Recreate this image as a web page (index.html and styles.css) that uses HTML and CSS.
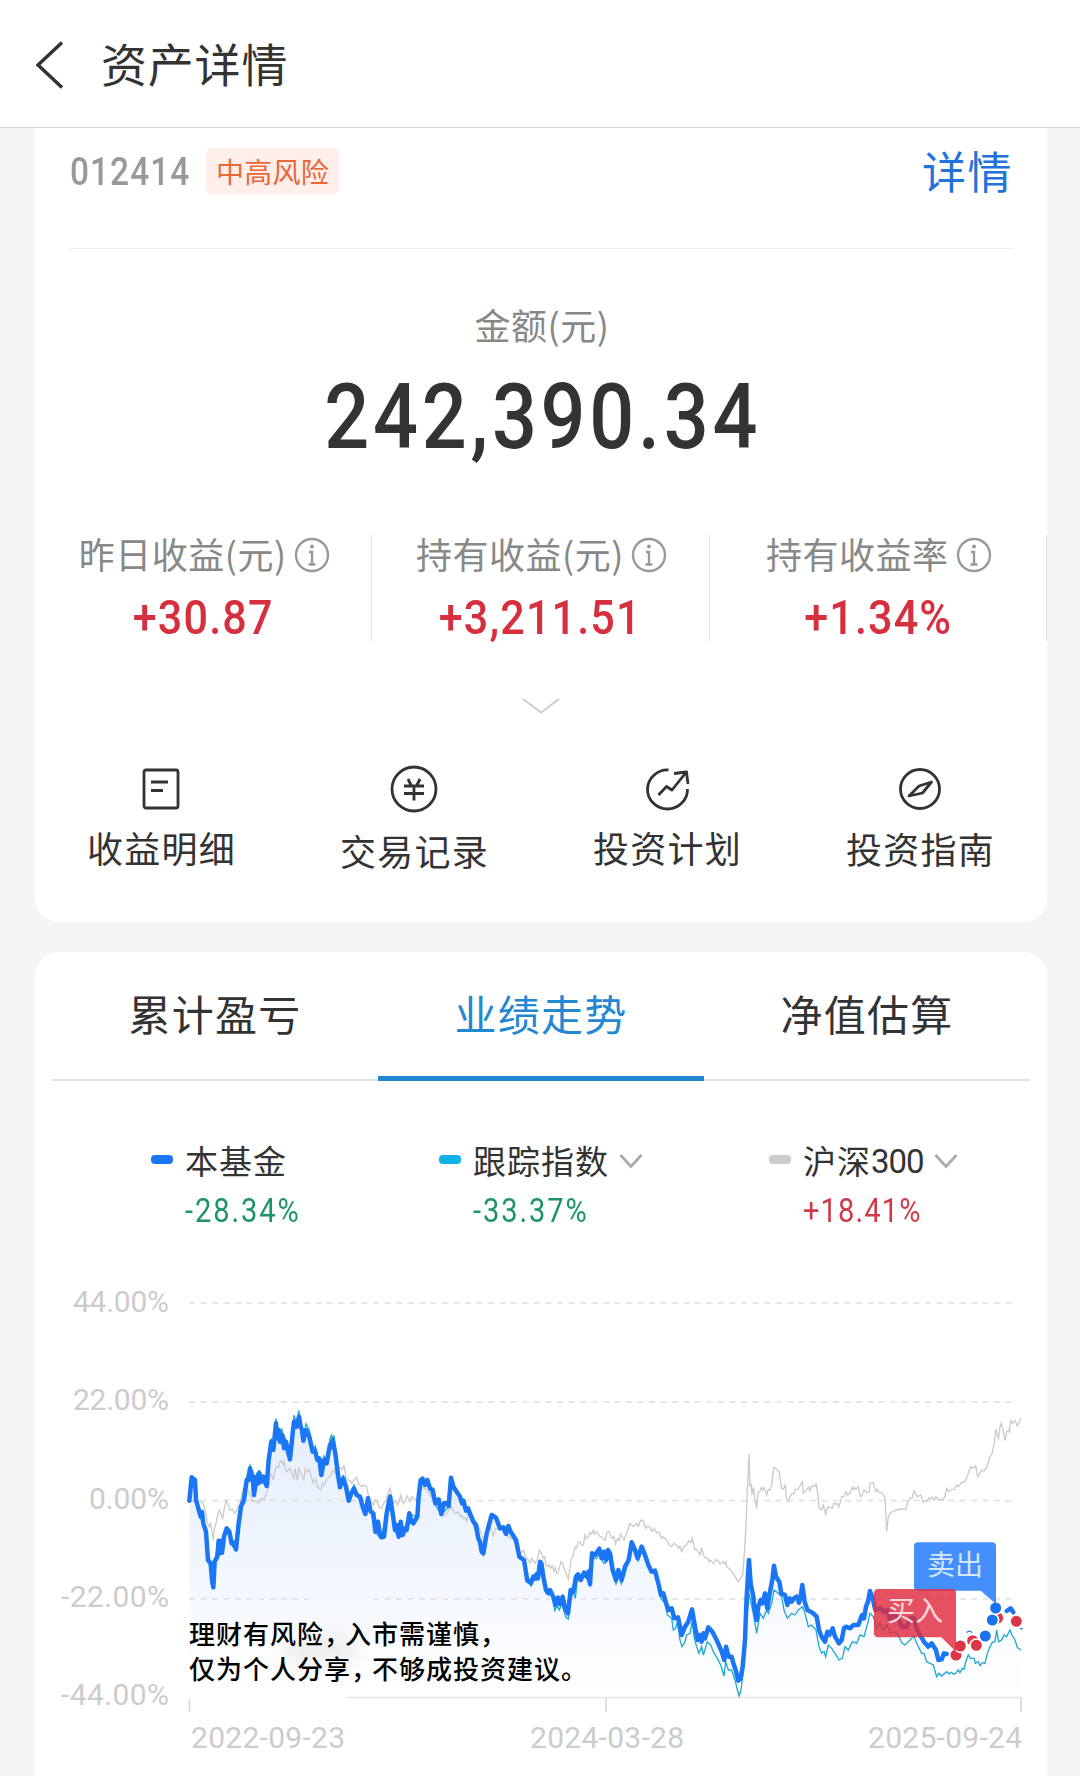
FILE: index.html
```html
<!DOCTYPE html>
<html lang="zh-CN">
<head>
    <meta charset="UTF-8">
    <meta name="viewport" content="width=device-width, initial-scale=1.0">
    <title>资产详情</title>
    <link rel="stylesheet" href="styles.css">
</head>
<body>
    <header>
        <svg class="back" viewBox="0 0 28 48"><path d="M26 1.500L2 24l24 22.500"/></svg>
        <h1>资产详情</h1>
    </header>
    <main>
        <section class="card asset-card">
            <div class="fund-row">
                <span class="fund-code">012414</span>
                <span class="risk-tag">中高风险</span>
                <a class="detail-link">详情</a>
            </div>
            <div class="amount-label">金额(元)</div>
            <div class="amount">242,390.34</div>
            <div class="stats">
                <div class="stat">
                    <div class="stat-label">昨日收益(元)<svg class="info" viewBox="0 0 36 36"><circle cx="18" cy="18" r="16"/><circle class="dot" cx="18" cy="9.500" r="2"/><path d="M15 15h3v12M14.500 27.500h7"/></svg></div>
                    <div class="stat-value">+30.87</div>
                </div>
                <div class="stat">
                    <div class="stat-label">持有收益(元)<svg class="info" viewBox="0 0 36 36"><circle cx="18" cy="18" r="16"/><circle class="dot" cx="18" cy="9.500" r="2"/><path d="M15 15h3v12M14.500 27.500h7"/></svg></div>
                    <div class="stat-value">+3,211.51</div>
                </div>
                <div class="stat">
                    <div class="stat-label">持有收益率<svg class="info" viewBox="0 0 36 36"><circle cx="18" cy="18" r="16"/><circle class="dot" cx="18" cy="9.500" r="2"/><path d="M15 15h3v12M14.500 27.500h7"/></svg></div>
                    <div class="stat-value">+1.34%</div>
                </div>
            </div>
            <svg class="expand" viewBox="0 0 38 16"><path d="M1 1l18 13.500L37 1"/></svg>
            <div class="actions">
                <div class="action">
                    <svg viewBox="0 0 48 48"><rect x="7" y="5" width="34" height="38" rx="2"/><path d="M14 17h17M14 25.500h12"/></svg>
                    <span>收益明细</span>
                </div>
                <div class="action action-low">
                    <svg viewBox="0 0 48 48"><circle cx="24" cy="24" r="22"/><path d="M18 14l3.500 7M30 14l-3.500 7M14 21h20M14 28.500h20M24 21v14.500"/></svg>
                    <span>交易记录</span>
                </div>
                <div class="action">
                    <svg viewBox="0 0 48 48"><path d="M25.500 5A20 19.500 0 1 0 44.500 24M31 8.500L43.500 7l1.500 12M43 7.500L29 25l-5.500-3.500L15.500 30"/></svg>
                    <span>投资计划</span>
                </div>
                <div class="action action-mid">
                    <svg viewBox="0 0 48 48"><circle cx="24" cy="24" r="19.500"/><path d="M35.500 17l-12.500 4L13 31l13.500-3z"/></svg>
                    <span>投资指南</span>
                </div>
            </div>
        </section>

        <section class="card chart-card">
            <nav class="tabs">
                <a class="tab">累计盈亏</a>
                <a class="tab active">业绩走势</a>
                <a class="tab">净值估算</a>
            </nav>
            <div class="legend">
                <div class="legend-item">
                    <i class="mark mark-fund"></i>
                    <div>
                        <div class="legend-name">本基金</div>
                        <div class="legend-value down">-28.34%</div>
                    </div>
                </div>
                <div class="legend-item">
                    <i class="mark mark-index"></i>
                    <div>
                        <div class="legend-name">跟踪指数<svg viewBox="0 0 24 16"><path d="M1.500 2L12 13.500 22.500 2"/></svg></div>
                        <div class="legend-value down">-33.37%</div>
                    </div>
                </div>
                <div class="legend-item">
                    <i class="mark mark-hs"></i>
                    <div>
                        <div class="legend-name">沪深<span class="num">300</span><svg viewBox="0 0 24 16"><path d="M1.500 2L12 13.500 22.500 2"/></svg></div>
                        <div class="legend-value up">+18.41%</div>
                    </div>
                </div>
            </div>

            <svg class="chart" viewBox="35 1227 1012 549">
                <defs>
                    <linearGradient id="area" gradientUnits="userSpaceOnUse" x1="0" y1="100" x2="0" y2="950">
                        <stop offset="0" stop-color="#e4edfd"/>
                        <stop offset="0.6" stop-color="#f3f7fe"/>
                        <stop offset="1" stop-color="#ffffff"/>
                    </linearGradient>
                    <filter id="soft" x="-30%" y="-60%" width="160%" height="220%"><feGaussianBlur stdDeviation="10"/></filter>
                </defs>

                <!-- series, plotted on a 3x grid that starts at 180,1380 -->
                <g transform="translate(180 1380) scale(0.33333)">
                    <path class="area" d="M28 362L35 292 45 300 48 360 62 410 78 455 84 540 100 622 104 545 116 482 124 518 140 445 155 490 168 508 183 380 192 360 210 265 222 345 238 280 260 318 266 240 274 185 288 130 300 185 330 238 342 120 357 108 370 182 388 170 405 215 424 285 440 250 458 180 472 270 480 322 498 320 506 362 522 325 556 402 564 355 586 455 604 472 630 350 645 450 668 465 688 400 712 410 722 300 742 300 766 370 784 402 806 378 813 293 840 350 880 425 910 520 935 405 978 460 1008 480 1018 530 1032 540 1042 602 1070 595 1080 545 1098 630 1128 675 1164 700 1180 625 1202 585 1230 610 1238 520 1290 520 1308 600 1325 600 1355 487 1375 535 1385 500 1415 575 1443 645 1505 765 1536 688 1555 780 1585 742 1633 840 1678 900 1695 760 1707 540 1730 720 1762 685 1782 557 1815 650 1867 615 1910 710 1935 785 1980 790 2058 690 2070 633 2110 700 2200 760 2275 850 2360 840 2420 800 2448 748 2523 800V953H28z"/>
                </g>
                <ellipse class="haze-white" cx="290" cy="1675" rx="125" ry="42" filter="url(#soft)"/>
                <ellipse class="haze-gray" cx="320" cy="1650" rx="42" ry="16" filter="url(#soft)"/>

                <g class="grid">
                    <path d="M189 1303H1017M189 1402H1017M189 1500.500H1017M189 1599H313M373 1599H1017"/>
                    <path class="base" d="M346 1697.500H1021"/>
                    <path class="tick" d="M189.500 1699v13M606 1698v14M1021 1697v15"/>
                </g>

                <g transform="translate(180 1380) scale(0.33333)">
                    <polyline class="line-hs" points="28,362 60,364 70,370 78,400 82,428 87,440 92,430 96,455 100,480 104,440 108,430 113,405 118,390 122,400 128,418 133,385 138,362 145,375 150,390 157,388 165,400 172,385 180,370 185,345 190,325 198,335 205,330 212,350 220,365 228,362 235,370 242,358 248,355 253,360 258,345 266,320 270,290 274,283 280,300 285,270 290,260 296,262 300,246 305,242 309,254 312,245 318,275 323,272 330,265 336,284 342,295 345,265 352,300 356,265 364,282 372,300 375,268 382,275 388,268 394,292 400,310 404,298 408,300 414,322 422,330 428,310 432,315 440,298 450,290 460,270 470,290 480,262 487,270 492,255 498,290 503,300 510,302 515,310 522,300 530,292 536,312 545,320 553,315 560,320 566,350 573,364 580,375 586,360 592,365 598,382 604,385 611,370 618,365 624,340 630,325 636,352 640,370 646,362 652,375 657,365 662,345 670,370 676,362 682,348 690,365 695,350 705,358 715,370 720,340 725,320 740,330 760,360 775,380 784,404 790,410 800,400 815,380 822,398 830,400 835,395 840,410 845,405 850,415 855,413 860,425 865,405 880,422 890,430 900,450 910,480 930,440 940,467 947,445 960,450 975,452 985,470 1000,480 1010,505 1020,520 1030,510 1035,528 1045,540 1050,550 1055,535 1065,550 1073,535 1078,510 1085,520 1090,535 1094,530 1098,558 1102,560 1107,554 1112,565 1117,557 1122,575 1126,563 1130,580 1135,575 1143,545 1147,548 1152,565 1165,597 1169,570 1173,540 1180,525 1185,500 1190,504 1195,486 1200,485 1205,496 1210,495 1215,465 1219,475 1225,470 1230,458 1235,462 1240,450 1244,463 1250,455 1260,470 1265,470 1275,482 1282,455 1287,455 1297,475 1302,470 1307,492 1313,475 1318,482 1322,463 1332,480 1340,460 1350,430 1360,440 1370,430 1375,439 1382,420 1389,422 1397,445 1403,438 1410,442 1416,453 1422,446 1430,458 1436,456 1445,475 1450,470 1460,480 1467,494 1475,500 1482,490 1490,495 1497,505 1500,500 1505,515 1512,500 1520,495 1527,482 1532,488 1537,475 1545,510 1550,508 1560,525 1565,505 1573,532 1583,535 1587,545 1590,540 1600,550 1610,538 1620,552 1630,545 1635,552 1638,546 1640,560 1652,570 1665,590 1675,605 1688,585 1693,520 1698,440 1702,330 1707,222 1710,320 1713,310 1716,345 1720,322 1730,385 1735,335 1740,334 1745,322 1748,330 1753,323 1760,345 1765,328 1770,330 1775,315 1778,285 1782,262 1788,267 1793,270 1797,275 1805,325 1810,328 1816,315 1819,354 1825,365 1830,350 1837,340 1842,341 1847,328 1854,328 1860,318 1867,305 1870,340 1878,332 1885,322 1890,333 1895,317 1903,320 1908,312 1912,330 1918,385 1924,390 1930,375 1937,405 1940,390 1945,380 1950,382 1957,385 1962,368 1967,373 1972,370 1977,380 1985,350 1992,350 1998,335 2003,345 2010,340 2017,322 2020,328 2024,323 2028,328 2035,320 2042,350 2047,345 2052,330 2060,338 2068,335 2070,310 2080,308 2087,335 2092,328 2098,338 2105,338 2115,352 2120,455 2125,410 2130,400 2140,393 2150,390 2160,387 2178,388 2182,370 2190,355 2196,355 2202,333 2212,350 2222,345 2230,367 2235,362 2240,365 2247,353 2252,357 2258,352 2263,360 2268,350 2274,357 2290,360 2296,345 2300,325 2307,335 2315,328 2322,328 2330,315 2335,320 2345,308 2355,305 2365,280 2372,260 2378,265 2387,258 2393,290 2400,280 2405,270 2412,273 2420,262 2430,230 2435,225 2443,190 2447,148 2453,165 2455,178 2460,140 2464,130 2469,148 2475,182 2480,155 2485,150 2488,155 2492,122 2497,130 2500,125 2505,122 2512,138 2523,115"/>
                    <polyline class="line-index" points="28,362 35,296 45,302 48,362 62,414 78,459 84,545 92,555 100,628 104,550 116,482 124,520 140,445 155,494 168,512 183,378 200,290 210,255 214,265 222,345 230,280 238,272 245,300 260,315 266,230 274,175 280,200 288,116 294,160 302,175 305,145 310,170 315,172 319,190 330,238 338,145 342,106 347,120 352,118 356,92 360,110 368,180 378,132 388,150 398,210 406,198 424,285 432,228 440,242 450,175 455,165 458,180 462,166 472,265 480,322 490,285 506,362 522,315 556,402 564,348 586,458 604,474 630,343 645,454 656,472 668,468 688,400 712,412 722,303 742,305 766,374 784,404 806,380 813,293 840,354 880,430 895,486 910,525 935,408 950,422 978,464 985,443 1008,485 1018,535 1032,545 1042,606 1054,618 1062,600 1070,600 1080,555 1090,600 1098,640 1112,642 1120,660 1124,692 1132,678 1138,690 1145,670 1152,695 1158,712 1165,717 1172,660 1180,635 1186,655 1192,600 1202,595 1215,585 1230,618 1238,535 1250,535 1258,520 1270,548 1276,550 1282,525 1290,545 1298,580 1308,612 1316,580 1324,612 1335,580 1355,496 1375,542 1385,510 1405,560 1425,585 1435,620 1443,655 1455,670 1462,705 1475,715 1480,750 1487,745 1492,725 1500,780 1506,800 1515,785 1520,765 1530,760 1536,725 1543,775 1550,800 1557,820 1565,800 1570,825 1582,785 1592,795 1600,815 1612,835 1622,855 1632,888 1637,845 1645,870 1655,870 1665,900 1677,948 1683,930 1690,870 1700,720 1707,640 1720,700 1730,760 1740,700 1750,715 1760,690 1765,700 1775,670 1782,630 1795,640 1805,650 1812,690 1822,715 1835,700 1845,705 1855,690 1867,680 1875,700 1885,740 1895,735 1908,750 1917,800 1925,820 1932,815 1937,830 1945,795 1955,805 1965,820 1977,840 1987,835 1995,800 2005,810 2017,785 2030,790 2040,765 2052,770 2063,730 2070,700 2080,710 2090,745 2100,730 2110,750 2122,735 2130,760 2145,755 2155,765 2165,788 2175,795 2190,780 2202,768 2210,790 2225,820 2232,820 2240,845 2250,850 2260,855 2270,890 2277,880 2285,888 2300,875 2307,882 2313,877 2320,882 2327,880 2335,870 2340,878 2347,865 2352,868 2358,843 2365,825 2372,835 2382,835 2386,850 2395,845 2400,857 2407,848 2415,850 2422,820 2430,800 2437,787 2445,785 2450,750 2456,785 2465,780 2472,765 2480,770 2490,750 2497,768 2505,780 2512,803 2523,810"/>
                    <polyline class="line-fund" points="28,362 35,292 45,300 48,360 55,385 62,410 66,396 70,430 78,455 84,540 92,550 96,600 100,622 104,545 112,530 116,482 120,520 124,482 126,518 132,470 140,445 148,455 155,490 160,488 168,508 176,430 183,380 192,360 200,300 206,300 210,265 218,290 222,345 230,290 235,310 238,280 245,305 250,290 260,318 266,240 274,185 280,210 288,130 292,175 296,150 300,185 307,165 312,205 318,185 324,215 330,238 338,160 342,125 350,140 357,110 362,140 366,150 370,182 378,150 384,162 388,170 398,215 405,212 412,240 418,235 424,285 432,240 440,250 445,220 450,195 454,200 458,180 466,220 472,270 480,322 490,295 498,320 506,362 514,340 522,325 530,345 540,350 548,380 556,402 564,355 572,395 580,400 586,455 594,425 600,465 604,472 612,470 620,400 630,350 638,400 645,450 650,435 656,470 662,425 668,465 675,445 680,450 688,400 694,425 700,430 712,410 716,350 722,300 728,296 735,315 742,300 750,325 758,330 766,370 776,358 784,402 792,370 800,370 806,378 813,293 820,320 830,335 840,350 846,370 850,362 858,392 864,385 872,405 880,425 888,435 895,475 900,485 905,515 910,520 920,460 935,405 948,413 960,445 970,442 978,462 985,438 992,455 1008,480 1018,530 1032,540 1042,602 1052,608 1060,590 1065,595 1070,582 1074,595 1080,545 1084,550 1090,590 1098,630 1105,640 1110,630 1120,650 1126,675 1134,653 1140,672 1148,650 1155,685 1164,700 1172,630 1180,635 1188,590 1194,583 1202,600 1212,578 1220,590 1225,575 1230,612 1236,520 1245,525 1258,506 1265,535 1272,515 1278,540 1284,510 1290,520 1298,570 1308,600 1315,570 1325,600 1335,560 1346,540 1355,487 1365,510 1373,535 1385,500 1395,525 1405,555 1415,575 1425,572 1435,610 1443,645 1450,640 1457,665 1465,690 1475,685 1483,715 1494,712 1505,765 1515,740 1525,725 1536,688 1545,740 1553,780 1558,765 1565,785 1570,760 1575,775 1585,742 1597,755 1610,780 1625,815 1633,840 1638,800 1646,830 1655,830 1660,850 1667,870 1675,902 1682,895 1688,860 1695,780 1700,650 1707,540 1712,610 1720,650 1724,690 1730,720 1735,680 1742,660 1748,670 1755,640 1762,685 1769,640 1777,600 1782,557 1788,590 1798,605 1804,640 1815,645 1822,675 1829,655 1835,665 1842,655 1850,650 1857,668 1862,650 1867,615 1874,665 1882,690 1892,695 1900,700 1910,710 1917,750 1925,770 1935,785 1942,755 1948,765 1958,745 1965,770 1977,790 1985,780 1992,745 1998,740 2010,745 2020,735 2035,735 2046,705 2052,715 2058,680 2064,665 2070,633 2078,655 2086,690 2100,685 2112,695 2122,690 2130,720 2142,705 2155,715 2165,740 2180,740 2192,715 2202,715 2210,745 2220,765 2232,785 2245,800 2255,790 2268,810 2275,840 2285,838 2292,820 2300,822"/>
                    <path class="line-fund" d="M2480 693l12-8 8 12"/>
                    <path class="fund-bit" d="M2360 758q8-9 16 0M2520 746h8"/>

                    <!-- trade points -->
                    <g class="points">
                        <circle class="buy" cx="2378" cy="782" r="19"/>
                        <circle class="buy" cx="2452" cy="714" r="20"/>
                        <circle class="buy" cx="2328" cy="825" r="19"/>
                        <circle class="buy" cx="2341" cy="798" r="19"/>
                        <circle class="buy" cx="2389" cy="796" r="19"/>
                        <circle class="buy" cx="2509" cy="724" r="19"/>
                        <circle class="sell" cx="2416" cy="768" r="19"/>
                        <circle class="sell" cx="2437" cy="720" r="19"/>
                        <circle class="sell" cx="2447" cy="684" r="19"/>
                    </g>
                    <path class="flag flag-sell" d="M2214 487H2436Q2448 487 2448 499V672L2402 632H2214Q2202 632 2202 620V499Q2202 487 2214 487z"/>
                    <path class="flag flag-buy" d="M2094 627H2316Q2328 627 2328 639V815L2284 772H2094Q2082 772 2082 760V639Q2082 627 2094 627z"/>
                </g>
                <text class="flag-text" x="927" y="1575" textLength="56">卖出</text>
                <text class="flag-text" x="887" y="1621" textLength="56">买入</text>

                <g class="axis axis-y">
                    <text x="73" y="1312" textLength="96">44.00%</text>
                    <text x="73" y="1410" textLength="96">22.00%</text>
                    <text x="89" y="1509" textLength="80">0.00%</text>
                    <text x="61" y="1607" textLength="108">-22.00%</text>
                    <text x="61" y="1705" textLength="108">-44.00%</text>
                </g>
                <g class="axis">
                    <text x="191" y="1748" textLength="154">2022-09-23</text>
                    <text x="530" y="1748" textLength="154">2024-03-28</text>
                    <text x="868" y="1748" textLength="154">2025-09-24</text>
                </g>
                <g class="notice">
                    <text x="189" y="1644">理财有风险，<tspan dx="-6">入市需谨慎，</tspan></text>
                    <text x="189" y="1679">仅为个人分享，<tspan dx="-6">不够成投资建议。</tspan></text>
                </g>
            </svg>
        </section>
    </main>
</body>
</html>
```
FILE: styles.css
```css
/* General Styles */
body {
    margin: 0;
    background-color: #f5f5f5;
    color: #333;
    font-family: "Noto Sans CJK SC", sans-serif;
    height: 1776px;
    overflow: hidden;
}

svg {
    fill: none;
    stroke: #333;
}

header {
    display: flex;
    align-items: center;
    height: 127px;
    padding-left: 36px;
    background-color: #fff;
    border-bottom: 1px solid #d4d4d4;
}

.back {
    width: 28px;
    height: 48px;
    stroke-width: 3.5;
    margin-top: 2px;
}

h1 {
    margin: -4px 0 0 37px;
    font-size: 46px;
    font-weight: 400;
    line-height: 60px;
    letter-spacing: 0.8px;
}

main {
    padding: 0 33px 0 35px;
}

.card {
    background-color: #fff;
}

/* Asset summary */
.asset-card {
    height: 794px;
    border-radius: 0 0 24px 24px;
}

.fund-row {
    display: flex;
    align-items: center;
    height: 87px;
    margin: 0 34px 0 35px;
    padding-bottom: 33px;
    border-bottom: 1px solid #eee;
}

/* narrow figures */
.fund-code,
.amount,
.stat-value,
.legend-value {
    font-family: Roboto, sans-serif;
    transform: scaleX(0.88);
}

.fund-code {
    width: 136px;
    margin-top: 1px;
    font-size: 38px;
    font-weight: 500;
    letter-spacing: 1.2px;
    color: #999;
    transform-origin: left;
}

.risk-tag {
    width: 133px;
    height: 46px;
    margin-top: -2px;
    line-height: 47px;
    text-align: center;
    font-size: 28px;
    letter-spacing: 0.3px;
    color: #e8683a;
    background-color: #ffeeea;
    border-radius: 6px;
}

.detail-link {
    margin: -3px 0 0 auto;
    font-size: 44px;
    line-height: 60px;
    letter-spacing: 1.5px;
    color: #2272dc;
}

.amount-label {
    margin-top: 51px;
    padding-left: 2px;
    text-align: center;
    font-size: 36px;
    line-height: 48px;
    letter-spacing: 0.5px;
    color: #888;
}

.amount {
    margin-top: 25px;
    text-align: center;
    font-size: 90px;
    font-weight: 500;
    line-height: 90px;
    letter-spacing: 4.2px;
    text-indent: 4px;
}

.stats {
    display: grid;
    grid-template-columns: repeat(3, 1fr);
    margin-top: 72px;
}

.stat {
    height: 106px;
    text-align: center;
    border-right: 1px solid #e3e3e3;
}

.stat-label {
    display: flex;
    justify-content: center;
    align-items: center;
    height: 36px;
    padding-left: 2px;
    line-height: 36px;
    font-size: 36px;
    letter-spacing: 0.5px;
    color: #888;
    white-space: nowrap;
}

.info {
    width: 36px;
    height: 36px;
    margin: 4px 0 0 7px;
    stroke: #999;
    stroke-width: 2.4;
}

.info .dot {
    fill: #999;
    stroke: none;
}

.stat-value {
    margin-top: 22px;
    font-size: 49px;
    font-weight: 500;
    line-height: 49px;
    letter-spacing: 1.3px;
    color: #d6303f;
}

.expand {
    display: block;
    width: 38px;
    height: 16px;
    margin: 57px auto 0;
    stroke: #ccc;
    stroke-width: 2;
}

.actions {
    display: grid;
    grid-template-columns: repeat(4, 1fr);
    margin-top: 51px;
}

.action {
    display: flex;
    flex-direction: column;
    align-items: center;
    font-size: 36px;
    line-height: 44px;
    letter-spacing: 1.3px;
}

.action svg {
    width: 48px;
    height: 48px;
    margin: 0 1px 12px 0;
    stroke-width: 2.8;
    stroke-linejoin: round;
}

.action-low svg {
    margin-bottom: 15px;
}

.action-mid svg {
    margin-bottom: 13px;
}

/* Chart card */
.chart-card {
    margin-top: 30px;
    border-radius: 24px 24px 0 0;
}

.tabs {
    display: grid;
    grid-template-columns: repeat(3, 1fr);
    margin: 0 17px;
    box-shadow: inset 0 -2px #e2e2e2;
}

.tab {
    padding: 36px 0 38px;
    text-align: center;
    font-size: 42px;
    line-height: 50px;
    letter-spacing: 1.2px;
    border-bottom: 5px solid transparent;
}

.tab.active {
    color: #2388d2;
    border-bottom-color: #2388d2;
}

.legend {
    display: grid;
    grid-template-columns: 288px 330px auto;
    margin-top: 61px;
    padding-left: 116px;
}

.legend-item {
    display: flex;
}

.mark {
    width: 22px;
    height: 9px;
    margin: 13px 12px 0 0;
    border-radius: 4px;
}

.mark-fund {
    background-color: #1a76f5;
}

.mark-index {
    background-color: #10b0e8;
}

.mark-hs {
    background-color: #ccc;
}

.legend-name {
    display: flex;
    align-items: center;
    height: 36px;
    font-size: 33px;
    line-height: 36px;
    letter-spacing: 1px;
}

.legend-name .num {
    font-family: Roboto, sans-serif;
    letter-spacing: -1px;
    padding-top: 3px;
}

.legend-name svg {
    width: 24px;
    height: 16px;
    margin: 2px 0 0 10px;
    stroke: #aaa;
    stroke-width: 2.8;
}

.legend-value {
    width: 140px;
    margin-top: 16px;
    font-size: 33px;
    line-height: 34px;
    margin-bottom: -1px;
    transform-origin: left;
}

.up {
    letter-spacing: 1.3px;
    color: #cf3a48;
}

.down {
    letter-spacing: 2.2px;
    color: #1d9468;
}

/* Chart */
.chart {
    display: block;
    width: 1012px;
    height: 549px;
}

.chart text {
    stroke: none;
}

.area {
    fill: url(#area);
    stroke: none;
}

.haze-white {
    fill: #fff;
    stroke: none;
    opacity: 0.8;
}

.haze-gray {
    fill: #e6e6ea;
    stroke: none;
    opacity: 0.7;
}

.grid path {
    stroke: #e0e0e0;
    stroke-width: 1.6;
    stroke-dasharray: 6 5.5;
}

.grid .base {
    stroke-dasharray: none;
    stroke: #e6e6e6;
}

.grid .tick {
    stroke-dasharray: none;
    stroke: #d8d8d8;
}

.line-hs {
    stroke: #cbcbcb;
    stroke-width: 4;
}

.line-index {
    stroke: #1fa9cf;
    stroke-width: 4;
}

.line-fund {
    stroke: #1a76f5;
    stroke-width: 13.5;
    stroke-linejoin: round;
    stroke-linecap: round;
}

.fund-bit {
    stroke: #1a76f5;
    stroke-width: 4;
}

.points circle {
    stroke: #fff;
    stroke-width: 5;
}

.buy {
    fill: #dc3545;
}

.sell {
    fill: #1a72ee;
}

.flag {
    stroke: none;
    opacity: 0.82;
}

.flag-sell {
    fill: #1a76fa;
}

.flag-buy {
    fill: #df2b3d;
}

.flag-text {
    fill: #fff;
    fill-opacity: 0.8;
    font-size: 28px;
}

.axis text {
    fill: #ccc;
    font-family: Roboto, sans-serif;
    font-size: 30px;
}

.notice text {
    fill: #000;
    font-size: 26px;
    font-weight: 500;
    letter-spacing: 1px;
}
```
